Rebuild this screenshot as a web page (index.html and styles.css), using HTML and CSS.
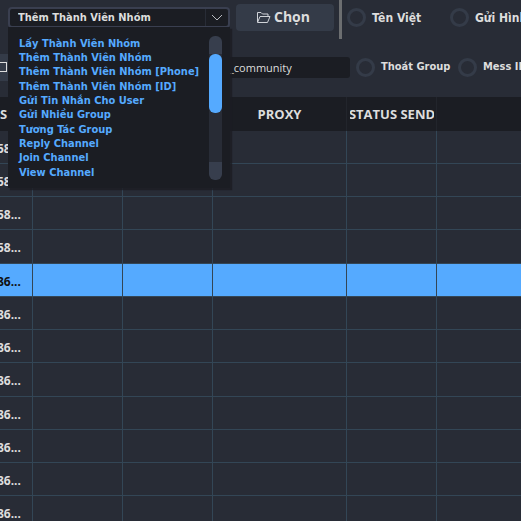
FILE: index.html
```html
<!DOCTYPE html>
<html lang="vi">
<head>
<meta charset="utf-8">
<title>Nhóm</title>
<link rel="stylesheet" href="styles.css">
</head>
<body>
<main class="app">
  <form class="panel">
    <div class="row row-top">
      <div class="combo">
        <select class="combo-select" aria-label="Chức năng">
          <option>Thêm Thành Viên Nhóm</option>
        </select>
        <svg class="combo-arrow" viewBox="0 0 12 8" aria-hidden="true"><path d="M1 1l5 5 5-5"/></svg>
        <div class="popup">
          <ul class="options" role="listbox" aria-label="Chức năng">
            <li role="option">Lấy Thành Viên Nhóm</li>
            <li role="option">Thêm Thành Viên Nhóm</li>
            <li role="option">Thêm Thành Viên Nhóm [Phone]</li>
            <li role="option">Thêm Thành Viên Nhóm [ID]</li>
            <li role="option">Gửi Tin Nhắn Cho User</li>
            <li role="option">Gửi Nhiều Group</li>
            <li role="option">Tương Tác Group</li>
            <li role="option">Reply Channel</li>
            <li role="option">Join Channel</li>
            <li role="option">View Channel</li>
          </ul>
          <div class="scrollbar"><div class="thumb"></div></div>
        </div>
      </div>
      <button class="choose" type="button">
        <svg class="folder" viewBox="0 0 15 13" aria-hidden="true"><path d="M1.500 11V1.500H5l1.500 1.500h5.500V5.500M1.500 11.500L4 5.500h10L11.500 11.500z"/></svg>
        Chọn
      </button>
      <span class="divider"></span>
      <label class="choice choice-name"><input type="radio" name="a">Tên Việt</label>
      <label class="choice"><input type="radio" name="b">Gửi Hình</label>
    </div>
    <div class="row row-bottom">
      <label class="check"><input type="checkbox" aria-label="Chọn nhóm"></label>
      <input class="group" type="text" value="_community" aria-label="Group">
      <label class="choice choice-leave"><input type="radio" name="c">Thoát Group</label>
      <label class="choice"><input type="radio" name="d">Mess ID</label>
    </div>
  </form>
  <table class="grid">
    <colgroup><col class="c-id"><col class="c-mid"><col class="c-mid"><col class="c-proxy"><col class="c-mid"><col></colgroup>
    <thead><tr><th class="id">S</th><th></th><th></th><th>PROXY</th><th><span class="send">STATUS SEND</span></th><th></th></tr></thead>
    <tbody>
      <tr><td>58...</td><td></td><td></td><td></td><td></td><td></td></tr>
      <tr><td>58...</td><td></td><td></td><td></td><td></td><td></td></tr>
      <tr><td>58...</td><td></td><td></td><td></td><td></td><td></td></tr>
      <tr><td>58...</td><td></td><td></td><td></td><td></td><td></td></tr>
      <tr class="selected"><td>86...</td><td></td><td></td><td></td><td></td><td></td></tr>
      <tr><td>86...</td><td></td><td></td><td></td><td></td><td></td></tr>
      <tr><td>86...</td><td></td><td></td><td></td><td></td><td></td></tr>
      <tr><td>86...</td><td></td><td></td><td></td><td></td><td></td></tr>
      <tr><td>86...</td><td></td><td></td><td></td><td></td><td></td></tr>
      <tr><td>86...</td><td></td><td></td><td></td><td></td><td></td></tr>
      <tr><td>86...</td><td></td><td></td><td></td><td></td><td></td></tr>
      <tr><td>86...</td><td></td><td></td><td></td><td></td><td></td></tr>
    </tbody>
  </table>
</main>
</body>
</html>
```
FILE: styles.css
```css
* { box-sizing: border-box; }

body {
  margin: 0;
  background: #282c36;
  color: #dddddd;
  font: bold 11px/14px "DejaVu Sans Condensed", "DejaVu Sans", sans-serif;
}

.app {
  height: 100vh;
  overflow: hidden;
}

.panel {
  display: flex;
  flex-direction: column;
  height: 97px;
}

.row {
  display: flex;
  align-items: center;
  white-space: nowrap;
}

.row > * { flex-shrink: 0; }

.row-top {
  height: 39px;
  padding-left: 8px;
}

.row-bottom {
  height: 28px;
  margin-top: 14px;
}

.combo {
  position: relative;
  width: 222px;
  margin-top: -5px;
}

.combo-select {
  display: block;
  appearance: none;
  width: 100%;
  height: 21px;
  padding: 1px 8px 0;
  border: 2px solid #3a3f50;
  border-radius: 4px;
  background: linear-gradient(#282c36, #282c36) right 22px top / 1px 100% no-repeat #1b1d23;
  color: #dddddd;
  font: inherit;
}

.combo-arrow {
  position: absolute;
  top: 7px;
  right: 7px;
  width: 12px;
  height: 8px;
  fill: none;
  stroke: #b8bbc0;
}

.popup {
  position: absolute;
  z-index: 1;
  top: 20px;
  left: 0;
  display: flex;
  justify-content: space-between;
  width: 222px;
  padding: 9px 8px 8px 11px;
  background: #1b1d23;
  box-shadow: 2px 2px 1px #1b1d23cc;
  color: #55aaff;
}

.options {
  margin: 0;
  padding: 1px 0 0;
  list-style: none;
}

.options li {
  height: 14px;
  line-height: 14px;
}

.options li:nth-child(3n) { margin-bottom: 1px; }

.scrollbar {
  flex: none;
  width: 13px;
  padding-top: 18px;
  border-radius: 6px;
  background: linear-gradient(#373e4d 18px, #282c36 18px, #282c36 calc(100% - 18px), #373e4d calc(100% - 18px));
}

.thumb {
  height: 59px;
  border-radius: 6px;
  background: #55aaff;
}

.choose {
  display: flex;
  align-items: center;
  justify-content: center;
  gap: 3px;
  width: 98px;
  height: 27px;
  margin: -5px 5px 0 6px;
  padding: 0 4px 0 0;
  border: 0;
  border-radius: 4px;
  background: #343b48;
  color: #dddddd;
  font: bold 14px/20px "Open Sans", sans-serif;
}

.folder {
  width: 15px;
  height: 13px;
  fill: none;
  stroke: #d0d3d8;
}

.divider {
  align-self: stretch;
  width: 3px;
  background: #6c6e70;
}

.choice {
  display: flex;
  align-items: center;
  gap: 6px;
}

.row-top .choice {
  margin: -4px 0 0 5px;
  font-size: 12px;
}

.row-top .choice-name {
  width: 98px;
}

.choice input {
  flex: none;
  appearance: none;
  width: 19px;
  height: 19px;
  margin: 0;
  border: 3px solid #343b48;
  border-radius: 50%;
}

.check {
  display: flex;
  align-items: center;
  width: 200px;
  height: 27px;
  background: #343b48;
}

.check input {
  appearance: none;
  width: 10px;
  height: 10px;
  margin: 0 0 0 -3px;
  border: 1px solid #dddddd;
}

.group {
  width: 150px;
  height: 21px;
  padding: 0 0 0 29px;
  border: 0;
  border-radius: 3px;
  background: #1b1d23;
  color: #dddddd;
  font: 11px/16px "Open Sans", sans-serif;
}

.choice-leave {
  width: 96px;
  margin: 0 6px;
}

.grid {
  width: 100%;
  table-layout: fixed;
  border-spacing: 0;
  font: bold 12px/16px "Noto Sans", sans-serif;
}

.c-id { width: 33px; }
.c-mid { width: 90px; }
.c-proxy { width: 134px; }

.grid th {
  height: 34px;
  padding: 0;
  border-right: 1px solid #22252c;
  background: #1b1d23;
  font: bold 13px/18px "Open Sans", sans-serif;
  white-space: nowrap;
}

.grid th.id { text-align: left; }

.send {
  display: flex;
  justify-content: center;
  margin: 0 2px 0 3px;
  overflow: hidden;
}

.grid td {
  height: 33px;
  padding: 3px 0 0;
  border-right: 1px solid #334656;
  border-bottom: 1px solid #334656;
  white-space: nowrap;
}

.grid tr:nth-child(4n) td { height: 34px; }

.grid td:first-child { text-indent: -3px; }

.grid td:last-child,
.grid th:last-child { border-right: 0; }

.grid .selected td {
  background: #55aaff;
  color: #111111;
}
```
